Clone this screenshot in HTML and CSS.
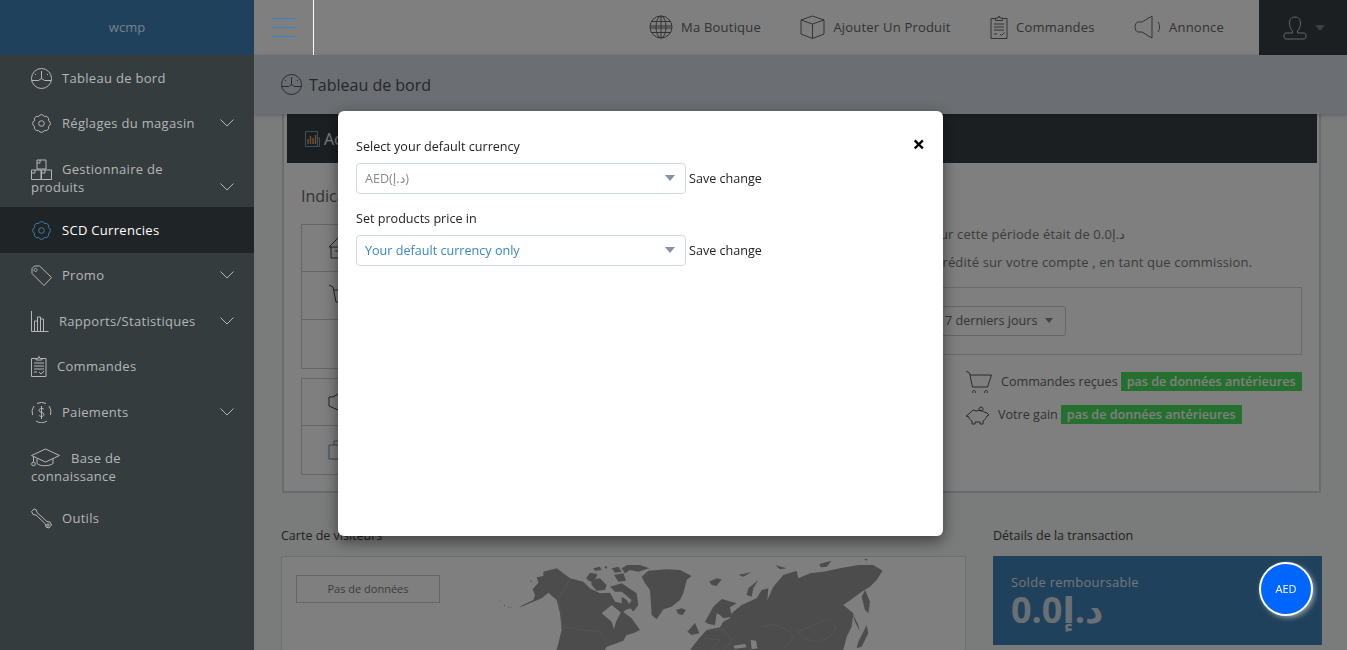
FILE: index.html
```html
<!DOCTYPE html>
<html lang="fr">
<head>
	<meta charset="UTF-8">
	<title>Tableau de bord</title>
	<link rel="stylesheet" href="styles.css">
</head>
<body>
<div class="page">
	<!-- sidebar sits above the modal backdrop -->
	<aside class="sidebar">
		<div class="logo">wcmp</div>
		<ul class="menu">
			<li class="item"><span class="label"><svg class="ico" width="21" height="21" viewBox="0 0 21 21"><circle cx="10.500" cy="10.500" r="10"/><path d="M.5 12.500h7l3-2 3 2h7M10.500 3v7.500M4 6l1 1M17 6l-1 1"/></svg>Tableau de bord</span></li>
			<li class="item"><span class="label"><svg class="ico" width="21" height="21" viewBox="0 0 21 21"><path d="M13.370 3.570A3.100 3.100 0 0 0 7.630 3.570A3.100 3.100 0 0 0 3.570 7.630A3.100 3.100 0 0 0 3.570 13.370A3.100 3.100 0 0 0 7.630 17.430A3.100 3.100 0 0 0 13.370 17.430A3.100 3.100 0 0 0 17.430 13.370A3.100 3.100 0 0 0 17.430 7.630A3.100 3.100 0 0 0 13.370 3.570Z"/><circle cx="10.500" cy="10.500" r="2.800"/></svg>Réglages du magasin</span><svg class="chev" width="14" height="8" viewBox="0 0 14 8"><path d="M.5.5L7 7 13.500.5"/></svg></li>
			<li class="item two"><span class="label"><svg class="ico" width="21" height="21" viewBox="0 0 21 21"><path d="M6 1h9v9H6zM.5 11h9.500v9.500H.5zM10.500 11H20.500v9.500H10.500zM6 4h3V1M1 14h3v-3M11 14h3v-3"/></svg>Gestionnaire de produits</span><svg class="chev" width="14" height="8" viewBox="0 0 14 8"><path d="M.5.5L7 7 13.500.5"/></svg></li>
			<li class="item active"><span class="label"><svg class="ico" width="21" height="21" viewBox="0 0 21 21"><path d="M13.370 3.570A3.100 3.100 0 0 0 7.630 3.570A3.100 3.100 0 0 0 3.570 7.630A3.100 3.100 0 0 0 3.570 13.370A3.100 3.100 0 0 0 7.630 17.430A3.100 3.100 0 0 0 13.370 17.430A3.100 3.100 0 0 0 17.430 13.370A3.100 3.100 0 0 0 17.430 7.630A3.100 3.100 0 0 0 13.370 3.570Z"/><circle cx="10.500" cy="10.500" r="2.800"/></svg>SCD Currencies</span></li>
			<li class="item"><span class="label"><svg class="ico" width="21" height="21" viewBox="0 0 21 21"><path d="M1 3.500L3.500 1h5l12 11.500-7.500 8L1 8.500zM4.500 3.500a1.500 1.500 0 1 0 .1 0"/></svg>Promo</span><svg class="chev" width="14" height="8" viewBox="0 0 14 8"><path d="M.5.5L7 7 13.500.5"/></svg></li>
			<li class="item"><span class="label"><svg class="ico" width="18" height="21" viewBox="0 0 18 21"><path d="M.5 0v20.500h17M3.500 20V10h3v10M6.500 20V6h3v14M9.500 20V8h3v12"/></svg>Rapports/Statistiques</span><svg class="chev" width="14" height="8" viewBox="0 0 14 8"><path d="M.5.5L7 7 13.500.5"/></svg></li>
			<li class="item"><span class="label"><svg class="ico" width="16" height="21" viewBox="0 0 16 21"><path d="M5 2.500H.5v18h14.500v-18H11M5 4V2.500h2l1-2 1 2h2V4zM3 7h10M3 10h10M3 13h10M3 16h3M8 16l2 2 3-3"/></svg>Commandes</span></li>
			<li class="item"><span class="label"><svg class="ico" width="21" height="21" viewBox="0 0 21 21"><path d="M6 1.500a10 10 0 0 1 9 0M18 4a10 10 0 0 1 1.500 9M16 19a10 10 0 0 1-11 0M1.500 13A10 10 0 0 1 3 4"/><path d="M13 7.500c-1-1.500-5-1.500-5 .8 0 2.700 5 1.500 5 4.300 0 2.300-4 2.300-5 .8M10.500 4v13"/></svg>Paiements</span><svg class="chev" width="14" height="8" viewBox="0 0 14 8"><path d="M.5.5L7 7 13.500.5"/></svg></li>
			<li class="item two"><span class="label"><svg class="ico ico-cap" width="29" height="20" viewBox="0 0 29 20"><path d="M14.500 1L28.500 7.500 14.500 14 .5 7.500zM6 10.500v5c3 3 12 3 16 0v-5M2.500 8.500V14"/><circle cx="2.500" cy="16" r="1.800"/></svg>Base de connaissance</span></li>
			<li class="item"><span class="label"><svg class="ico" width="21" height="21" viewBox="0 0 21 21"><path d="M.5 3.500L3 1l2 .5 1 3 10 9 3 .5 1.500 3-2.500 3-3-1-.5-3-9.500-9-3-.5z"/><circle cx="17" cy="17" r="1.200"/></svg>Outils</span></li>
		</ul>
	</aside>

	<div class="main">
		<header class="topbar">
			<a class="burger"><span></span><span></span><span></span></a>
			<nav class="topnav">
				<a class="navlink"><svg width="24" height="24" viewBox="0 0 24 24"><circle cx="12" cy="12" r="11"/><ellipse cx="12" cy="12" rx="5" ry="11"/><path d="M12 1v22M2 6.500h20M1 11h22M1 13h22M2 17.500h20"/></svg>Ma Boutique</a>
				<a class="navlink"><svg width="25" height="24" viewBox="0 0 25 24"><path d="M12.500 1L24 5v14l-11.500 4.500L1 19V5zM1 5l11.500 4L24 5M12.500 9v14.500"/></svg>Ajouter Un Produit</a>
				<a class="navlink"><svg width="18" height="24" viewBox="0 0 18 24"><path d="M5.500 3.500H1v20h16v-20h-4.500M5.500 5.500v-2.500h2.500l1-2 1 2h2.500v2.500zM4 9h10M4 12h10M4 15h10M4 19h3M10 19l1.500 1.500 3-3"/></svg>Commandes</a>
				<a class="navlink"><svg width="27" height="24" viewBox="0 0 27 24"><path d="M18 1v22L8 17H4c-4-1-4-9 0-10h4zM24 7c2 3 2 7 0 10"/></svg>Annonce</a>
			</nav>
			<div class="userbox">
				<svg width="24" height="24" viewBox="0 0 24 24"><path d="M12 1c-4 0-5.500 3-5.500 6 0 3 1 6 3 8v2H3c-1.500 0-2 1-2 3s.5 3 2 3h18c1.500 0 2-1 2-3s-.5-3-2-3h-6.500v-2c2-2 3-5 3-8 0-3-1.500-6-5.500-6z"/></svg>
				<i class="caret"></i>
			</div>
		</header>

		<div class="pagetitle">
			<svg width="21" height="21" viewBox="0 0 21 21"><circle cx="10.500" cy="10.500" r="10"/><path d="M.5 12.500h7l3-2 3 2h7M10.500 3v7.500M4 6l1 1M17 6l-1 1"/></svg>
			<h1>Tableau de bord</h1>
		</div>

		<div class="content">
			<section class="panel">
				<div class="panelbar">
					<svg width="15" height="16" viewBox="0 0 15 16"><path class="bar-frame" d="M.5.5h12v15H.5zM12.500 7h2v8.500h-2"/><path class="bar-fill" d="M3 13V8M5.500 13V5M8 13V7M10.500 13V4"/></svg>
					Activité
				</div>
				<h2>Indicateurs</h2>
				<div class="stats">
					<div class="tables">
						<div class="tbl">
							<div class="tr"><svg width="20" height="22" viewBox="0 0 20 22"><path d="M10 1L1 10h18zM3 10v11h14V10M7 14h6"/></svg></div>
							<div class="tr"><svg width="28" height="24" viewBox="0 0 28 24"><path d="M1 1l4 2 3 15h15l3-12H6"/></svg></div>
							<div class="tr"></div>
						</div>
						<div class="tbl">
							<div class="tr"><svg width="22" height="18" viewBox="0 0 22 18"><path d="M1 4l4 0 5-3 9 4v8l-9 4-9-4z"/></svg></div>
							<div class="tr"><svg class="bag" width="18" height="20" viewBox="0 0 18 20"><path d="M1 5h16v14H1zM6 5V1h6v4"/></svg></div>
						</div>
					</div>
					<div class="summary">
						<p>Votre revenu pour cette période était de 0.0د.إ</p>
						<p>Soit 0.0د.إ a été crédité sur votre compte , en tant que commission.</p>
						<div class="rangebox"><span class="rangebtn">7 derniers jours<i class="caret small"></i></span></div>
						<div class="compare">
							<div class="cmprow">
								<svg width="27" height="22" viewBox="0 0 27 22"><path d="M0 0l3.500 2 3 14h15l4-12H4M8 19.500a1.500 1.500 0 1 0 .1 0M20 19.500a1.500 1.500 0 1 0 .1 0"/></svg>
								<span class="cmplabel">Commandes reçues</span><span class="badge">pas de données antérieures</span>
							</div>
							<div class="cmprow">
								<svg width="24" height="22" viewBox="0 0 24 22"><path d="M4 9l3-3 3 1c3-1 6-1 8 1l3 1 2 2-2 1c-1 2-2 4-4 5v3h-3v-2H9v2H6v-3c-2-1-3-2-3-4l-3-1zM15 3a2 2 0 1 0 .1 0"/></svg>
								<span class="cmplabel">Votre gain</span><span class="badge">pas de données antérieures</span>
							</div>
						</div>
					</div>
				</div>
			</section>

			<div class="lower">
				<section class="mapcol">
					<h3>Carte de visiteurs</h3>
					<div class="mapbox">
						<div class="nodata">Pas de données</div>
						<svg class="worldmap" viewBox="0 21 1200 279">
							<path d="M128 118L145 98 140 82 160 78 160 65 200 55 240 85 280 95 300 115 330 130 360 128 375 155 395 160 395 140 410 150 425 175 410 178 395 190 365 165 335 190 365 215 372 238 378 215 395 182 425 205 450 240 430 250 410 255 400 272 380 280 350 290 345 300 200 300 215 240 210 190 200 150 175 128 155 145 100 168 85 172 130 150 135 135Z"/>
							<path d="M288 85L300 68 322 72 318 85 300 95ZM303 90L330 85 350 105 345 120 320 122 305 105ZM310 55L330 50 335 60 315 62ZM345 48L352 50 350 56 344 54ZM365 55L385 50 395 65 375 68ZM372 75L400 70 408 92 385 95ZM412 45L450 45 478 55 445 65 420 60 405 70 395 55ZM360 110L395 100 440 130 445 165 430 185 415 165 425 150 395 125 375 125Z"/>
							<path d="M455 80L475 62 530 58 570 60 605 78 590 90 580 130 570 150 545 170 520 178 500 208 485 195 482 150 480 120 465 100Z"/>
							<path d="M558 180L575 175 588 180 578 195 565 192ZM658 95L680 85 695 88 680 108 665 105ZM745 75L785 66 760 80ZM770 135L775 115 805 90 790 115 785 140ZM855 45L890 55 870 58ZM988 42L1025 32 1010 50 992 52ZM1122 28L1132 26 1130 32Z"/>
							<path d="M645 215L670 170 695 147 740 160 720 172 725 200 700 205 690 195 680 190 675 225 655 222ZM592 245L615 218 628 250 605 255Z"/>
							<path d="M600 300L625 268 650 240 690 232 700 215 720 205 725 190 755 165 800 145 815 120 835 115 832 150 850 110 880 75 920 62 925 85 960 70 1000 65 1050 55 1105 45 1150 45 1178 62 1160 90 1140 110 1115 125 1095 140 1060 165 1090 190 1085 230 1070 260 1060 300Z"/>
							<path d="M1115 140L1125 120 1140 155 1135 190 1125 180ZM1085 185L1105 225 1110 245 1095 215ZM1105 275L1130 225 1135 250 1115 290 1100 295Z"/>
							<path class="sea" d="M782 270L798 272 802 295 785 298ZM730 287L765 282 770 292 735 296Z"/>
							<path class="dots" d="M30 153h2M42 167h3M55 172h3M64 173h2M122 92l3 4"/>
							<path class="borders" d="M240 85L205 150 215 190 215 230 280 240 330 245 350 285M920 245L960 230 1015 208 1040 230 1020 262 980 275 940 265ZM820 230L850 222 900 245 912 262 885 290M650 240L700 240 725 270 700 300M640 265L690 270 665 300M700 240L715 225"/>
						</svg>
					</div>
				</section>
				<section class="txcol">
					<h3>Détails de la transaction</h3>
					<div class="txcard">
						<div class="txlabel">Solde remboursable</div>
						<div class="txvalue">0.0د.إ</div>
					</div>
				</section>
			</div>
		</div>
	</div>
</div>

<div class="backdrop">
	<div class="modal">
		<a class="close">×</a>
		<div class="field">
			<label>Select your default currency</label>
			<div class="row">
				<div class="select"><span>AED(د.إ)</span><i class="arrow"></i></div>
				<a class="save">Save change</a>
			</div>
		</div>
		<div class="field">
			<label>Set products price in</label>
			<div class="row">
				<div class="select blue"><span>Your default currency only</span><i class="arrow"></i></div>
				<a class="save">Save change</a>
			</div>
		</div>
	</div>
</div>

<a class="bubble">AED</a>
</body>
</html>
```
FILE: styles.css
```css
* {
	box-sizing: border-box;
}
html, body {
	margin: 0;
	height: 100%;
	overflow: hidden;
}
body {
	font-family: "Open Sans", "DejaVu Sans", sans-serif;
	font-size: 12.600px;
	color: #787878;
	background: #f5f6f6;
}
h1, h2, h3, p, ul {
	margin: 0;
	padding: 0;
	font-weight: 400;
}
svg {
	fill: none;
	flex: none;
}
.page {
	display: flex;
	height: 650px;
}

/* sidebar */
.sidebar {
	position: relative;
	z-index: 20;
	width: 254px;
	flex: none;
	font-size: 13px;
	background: #353c3e;
	color: #b4b7b7;
}
.logo {
	height: 55px;
	line-height: 55px;
	text-align: center;
	background: #1f415b;
	color: #75838e;
}
.menu {
	list-style: none;
}
.item {
	display: flex;
	align-items: center;
	padding: 12.500px 20px 12.500px 31px;
	line-height: 20.500px;
	letter-spacing: .3px;
}
.item.two {
	align-items: flex-end;
	padding: 14px 20px 11px 31px;
	line-height: 18px;
}
.item.two .label {
	max-width: 150px;
	margin-right: auto;
}
.item.two .chev {
	margin-bottom: 5px;
}
.item.active {
	background: #1f2426;
	color: #fff;
}
.item.active .ico {
	stroke: #3a7cae;
}
.label {
	flex: 1;
}
.ico {
	stroke: #b4b7b7;
	vertical-align: middle;
	margin: -4px 10px -2px 0;
}
.ico-cap {
	margin-right: 11px;
}
.chev {
	stroke: #b4b7b7;
}

/* main */
.main {
	flex: 1;
	min-width: 0;
	display: flex;
	flex-direction: column;
}
.topbar {
	display: flex;
	align-items: center;
	height: 55px;
	flex: none;
	background: #fff;
}
.burger {
	position: relative;
	z-index: 20;
	display: flex;
	flex-direction: column;
	justify-content: center;
	gap: 7.500px;
	width: 60px;
	height: 55px;
	padding-left: 18px;
	border-right: 1px solid #fff;
}
.burger span {
	display: block;
	width: 23px;
	height: 1.500px;
	background: #3583c4;
}
.topnav {
	flex: 1;
	display: flex;
	justify-content: flex-end;
	gap: 39px;
	padding-right: 35px;
}
.navlink {
	display: flex;
	align-items: center;
	gap: 8.500px;
	padding-bottom: 1px;
	font-size: 13px;
	letter-spacing: .2px;
	color: #666;
}
.navlink svg {
	stroke: #666;
}
.userbox {
	display: flex;
	align-items: center;
	gap: 8px;
	width: 88px;
	height: 55px;
	padding-left: 24px;
	background: #363f44;
}
.userbox svg {
	stroke: #ccc;
}
.caret {
	width: 0;
	height: 0;
	border-left: 5px solid transparent;
	border-right: 5px solid transparent;
	border-top: 6px solid #7a7f82;
}
.caret.small {
	display: inline-block;
	margin-left: 8px;
	vertical-align: 2px;
	border-left-width: 4px;
	border-right-width: 4px;
	border-top-width: 5px;
	border-top-color: #888;
}
.pagetitle {
	display: flex;
	align-items: center;
	gap: 7px;
	height: 59px;
	flex: none;
	padding-left: 27px;
	background: #d7dde5;
	box-shadow: 0 1px 4px rgba(0, 0, 0, .25);
	position: relative;
	z-index: 2;
}
.pagetitle svg {
	stroke: #4a5a68;
}
.pagetitle h1 {
	font-size: 16px;
	color: #46505c;
}
.content {
	flex: 1;
	min-height: 0;
	overflow: hidden;
	padding: 0 25px 0 27px;
}
.panel {
	height: 379px;
	margin: 0 1px;
	padding: 0 2px 0 3px;
	border: 2px solid #d0d6e0;
	border-top: 0;
	background: #fff;
}
.panelbar {
	display: flex;
	align-items: center;
	gap: 4px;
	height: 49px;
	padding-left: 18px;
	font-size: 16px;
	background: #363f44;
	color: #fff;
}
.bar-frame {
	stroke: #7da0bd;
}
.bar-fill {
	stroke: #e39a5a;
	stroke-width: 1.500;
}
.panel h2 {
	margin: 21px 0 0 14px;
	font-size: 16px;
	line-height: 24px;
	color: #666;
}
.stats {
	display: flex;
	margin: 16px 15px 0 14px;
}
.tables {
	width: 340px;
	flex: none;
}
.tbl {
	margin-bottom: 9px;
	border: 1px solid #c8cdd6;
}
.tr {
	display: flex;
	align-items: center;
	height: 48px;
	padding-left: 26px;
	border-bottom: 1px solid #c8cdd6;
}
.tr:first-child {
	height: 47px;
}
.tr:last-child {
	border-bottom: 0;
}
.tr svg {
	stroke: #444;
}
.tr svg.bag {
	stroke: #5e93c0;
}
.summary {
	flex: 1;
	min-width: 0;
	margin-left: 2px;
	padding-top: 1px;
}
.summary p {
	font-size: 13px;
	letter-spacing: .15px;
	line-height: 18px;
	margin-bottom: 10px;
	white-space: nowrap;
	padding-left: 197px;
}
.rangebox {
	height: 68px;
	margin-top: 16px;
	padding-top: 18px;
	border: 1px solid #d0d6e0;
}
.rangebtn {
	display: block;
	width: 136px;
	height: 30px;
	margin-left: 286px;
	padding-left: 14px;
	line-height: 28px;
	border: 1px solid #c8cdd6;
	border-radius: 3px;
	color: #666;
}
.compare {
	margin: 17px 0 0 323px;
}
.cmprow {
	display: flex;
	align-items: center;
	height: 19px;
	margin-bottom: 14px;
	white-space: nowrap;
}
.cmprow svg {
	stroke: #555;
	margin-right: 8px;
}
.cmplabel {
	margin-right: 3px;
	color: #666;
}
.badge {
	height: 19px;
	line-height: 19px;
	padding: 0 6px;
	font-weight: 600;
	background: #4ae05e;
	color: #fff;
}
.lower {
	display: flex;
	gap: 27px;
	margin-top: 32px;
}
.lower h3 {
	font-size: 12.500px;
	line-height: 22px;
	color: #444;
}
.mapcol {
	width: 685px;
	flex: none;
}
.mapbox {
	display: flex;
	align-items: flex-start;
	height: 200px;
	margin-top: 9px;
	border: 1px solid #d8dde4;
	background: #fff;
}
.nodata {
	width: 144px;
	height: 28px;
	margin: 18px 0 0 14px;
	line-height: 26px;
	text-align: center;
	font-size: 11px;
	border: 1px solid #c8cdd6;
	color: #777;
}
.worldmap {
	width: 400px;
	height: 93px;
	margin-left: 50px;
	fill: #989898;
}
.sea {
	fill: #fff;
}
.borders {
	fill: none;
	stroke: #ccc;
	stroke-width: 1;
}
.dots {
	fill: none;
	stroke: #989898;
	stroke-width: 3;
}
.txcol {
	flex: 1;
	min-width: 0;
}
.txcard {
	height: 89px;
	margin-top: 9px;
	padding: 17px 18px;
	background: #3e82b6;
	color: #fff;
}
.txlabel {
	font-size: 13px;
	line-height: 18px;
	letter-spacing: .3px;
	color: #e6eaee;
}
.txvalue {
	font-size: 36px;
	line-height: 38px;
	font-weight: 700;
	color: #d4dee6;
}

/* modal */
.backdrop {
	position: fixed;
	inset: 0;
	z-index: 10;
	padding: 111px 0 0 338px;
	background: rgba(0, 0, 0, .5);
}
.modal {
	position: relative;
	width: 605px;
	height: 425px;
	padding: 27px 18px;
	border-radius: 6px;
	background: #fff;
	box-shadow: 0 5px 15px rgba(0, 0, 0, .5);
}
.close {
	position: absolute;
	top: 21px;
	right: 18px;
	font-size: 22px;
	line-height: 1;
	font-weight: 700;
	color: #000;
}
.field {
	margin-bottom: 16px;
}
.field label {
	display: block;
	margin-bottom: 7px;
	line-height: 18px;
	color: #222;
}
.row {
	display: flex;
	align-items: center;
	gap: 3px;
}
.select {
	display: flex;
	align-items: center;
	justify-content: space-between;
	width: 330px;
	height: 31px;
	padding: 0 10px 1px 8px;
	border: 1px solid #cfd8e3;
	border-radius: 4px;
	color: #8a8a8a;
}
.select.blue {
	color: #3a87c0;
}
.arrow {
	width: 0;
	height: 0;
	border-left: 5px solid transparent;
	border-right: 5px solid transparent;
	border-top: 6px solid #8493a3;
}
.save {
	margin-bottom: 1px;
	color: #222;
}
.bubble {
	position: fixed;
	z-index: 20;
	left: 1259px;
	top: 562px;
	width: 54px;
	height: 54px;
	line-height: 50px;
	text-align: center;
	font-size: 11px;
	border: 2px solid #fff;
	border-radius: 50%;
	background: #0066ff;
	color: #fff;
	box-shadow: 2px 2px 5px rgba(190, 190, 190, .7);
}
```
